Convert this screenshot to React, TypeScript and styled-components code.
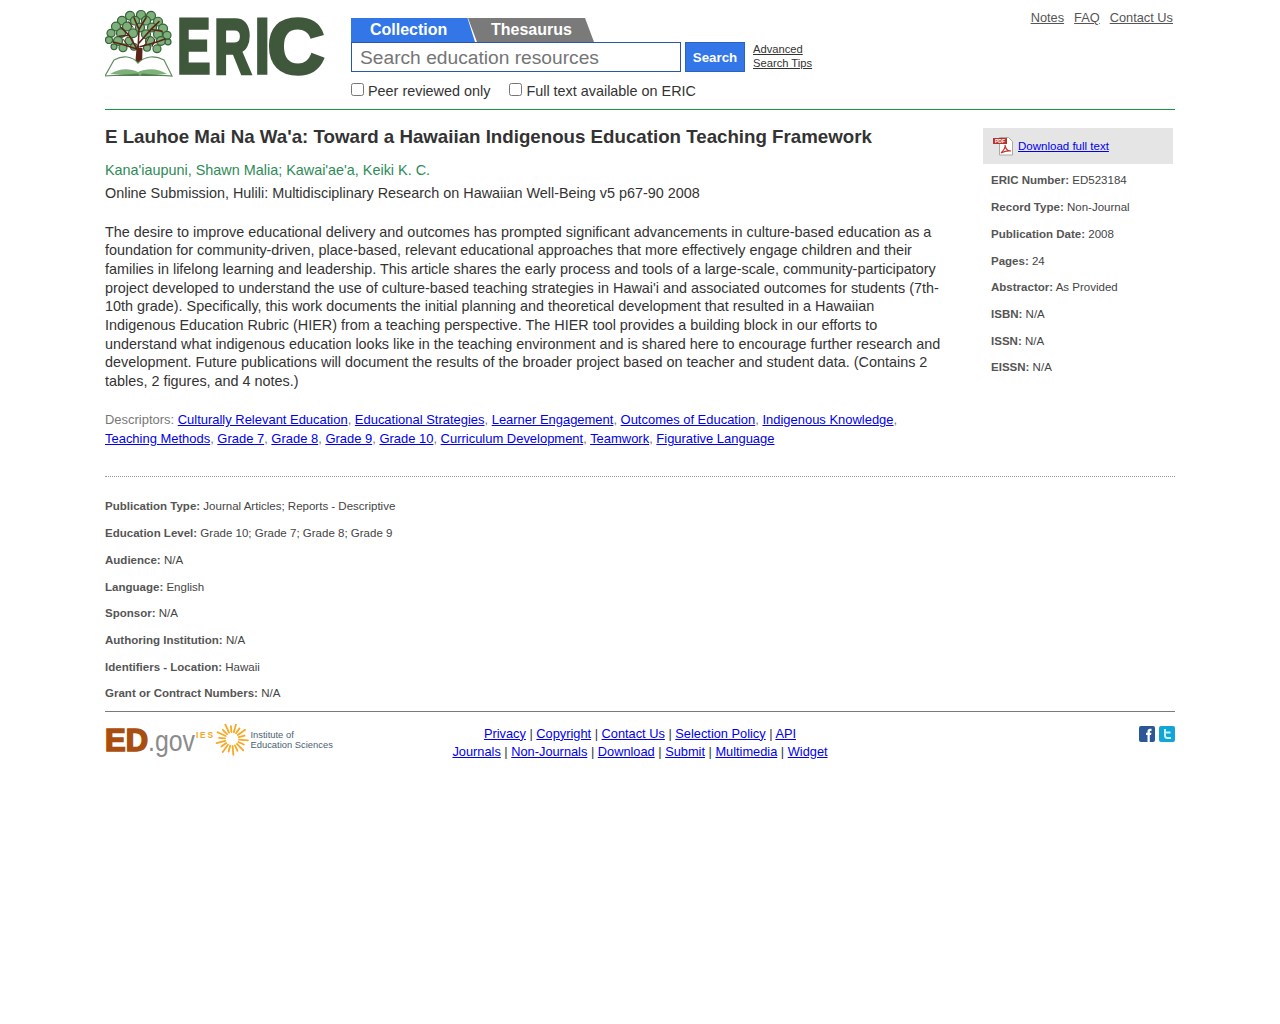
import React from "react";
import styled, { createGlobalStyle } from "styled-components";

const GlobalStyle = createGlobalStyle`
  html, body { margin: 0; padding: 0; background: #fff; }
  body { font-family: "Liberation Sans", Arial, sans-serif; color: #333; }
`;

const Page = styled.div`
  width: 1070px;
  margin-left: 105px;
`;

const Header = styled.header`
  display: flex;
  height: 109px;
  border-bottom: 1px solid #1f9142;
`;

const LogoWrap = styled.a`
  display: block;
  width: 246px;
  height: 92px;
`;

const SearchArea = styled.div`
  padding-top: 18px;
  width: 620px;
`;

const Tabs = styled.div`
  display: flex;
  height: 24px;
`;

const CollectionTab = styled.div`
  width: 124px;
  height: 24px;
  background: #3276e8;
  color: #fff;
  font-size: 16px;
  font-weight: bold;
  line-height: 24px;
  padding-left: 19px;
  box-sizing: border-box;
  clip-path: polygon(0 0, 116.5px 0, 100% 100%, 0 100%);
`;

const ThesaurusTab = styled.div`
  width: 126px;
  height: 24px;
  margin-left: -7px;
  background: #7a7a7a;
  color: #fff;
  font-size: 16px;
  font-weight: bold;
  line-height: 24px;
  padding-left: 23px;
  box-sizing: border-box;
  clip-path: polygon(0 0, 117px 0, 100% 100%, 9px 100%);
`;

const SearchRow = styled.div`
  display: flex;
  align-items: flex-start;
`;

const SearchInput = styled.input`
  box-sizing: border-box;
  width: 330px;
  height: 30px;
  border: 1px solid #2a55a8;
  padding: 2px 8px 0;
  margin: 0;
  font-family: "Liberation Sans", Arial, sans-serif;
  font-size: 19.2px;
  outline: none;
  &::placeholder { color: #757575; opacity: 1; }
`;

const SearchButton = styled.button`
  box-sizing: border-box;
  width: 60px;
  height: 30px;
  margin: 0 0 0 4px;
  padding: 0;
  background: #3276e8;
  border: 1px solid #2a62c0;
  color: #fff;
  font-family: "Liberation Sans", Arial, sans-serif;
  font-size: 13.3px;
  font-weight: bold;
`;

const SearchLinks = styled.div`
  margin-left: 8px;
  font-size: 11.2px;
  line-height: 14px;
  a { color: #333; display: block; }
`;

const FilterRow = styled.div`
  display: flex;
  align-items: center;
  height: 20px;
  margin-top: 9px;
  font-size: 14.4px;
  color: #333;
`;

const FilterLabel = styled.label<{ $gap?: number }>`
  display: flex;
  align-items: center;
  margin-right: ${(p) => p.$gap ?? 0}px;
`;

const Check = styled.input`
  width: 13px;
  height: 13px;
  margin: 0 4px 3px 0;
`;

const TopLinks = styled.nav`
  margin-left: auto;
  display: flex;
  gap: 10px;
  padding: 10px 2px 0 0;
  font-size: 12.8px;
  line-height: 15px;
  a { color: #555; }
`;

const Columns = styled.div`
  display: flex;
  justify-content: space-between;
  padding-top: 18px;
`;

const MainCol = styled.main`
  width: 840px;
`;

const Title = styled.h1`
  margin: 0;
  font-size: 18.72px;
  line-height: 18px;
  font-weight: bold;
  color: #333;
`;

const Authors = styled.div`
  margin-top: 15px;
  font-size: 14.4px;
  line-height: 18px;
  color: #2e8b57;
`;

const Source = styled.div`
  margin-top: 5px;
  font-size: 14.4px;
  line-height: 18px;
  color: #333;
`;

const Abstract = styled.p`
  margin: 20.7px 0 0;
  font-size: 14.4px;
  line-height: 18.67px;
  color: #333;
`;

const Descriptors = styled.div`
  margin-top: 19.3px;
  font-size: 12.96px;
  line-height: 19px;
  color: #777;
  a { color: #00e; }
`;

const Sidebar = styled.aside`
  width: 190px;
  margin-right: 2px;
`;

const DownloadBox = styled.div`
  display: flex;
  align-items: center;
  height: 36px;
  padding-left: 10px;
  background: #e5e5e5;
  font-size: 11.52px;
  a { color: #00e; margin: 0 0 0 5px; }
`;

const SideFacts = styled.div`
  padding: 9.45px 0 0 8px;
`;

const Fact = styled.div`
  font-size: 11.52px;
  line-height: 14px;
  margin-bottom: 12.72px;
  color: #444;
  b { color: #555; }
`;

const Details = styled.section`
  margin-top: 28px;
  padding-top: 22.4px;
  border-top: 1px dotted #999;
  ${Fact}:last-child { margin-bottom: 0; }
`;

const Footer = styled.footer`
  display: grid;
  grid-template-columns: 1fr auto 1fr;
  align-items: start;
  border-top: 1px solid #7a7a7a;
  margin-top: 10.2px;
  padding-top: 13px;
`;

const FooterLogos = styled.div`
  height: 36px;
  margin-top: -1px;
`;

const FooterLinks = styled.div`
  font-size: 12.8px;
  line-height: 18px;
  text-align: center;
  color: #333;
  a { color: #00e; }
`;

const Social = styled.div`
  display: flex;
  justify-content: flex-end;
  gap: 4px;
  padding-top: 1px;
`;

const leaves: [number, number, number][] = [
  [25, 6, 4.500], [36, 5, 4.500], [46, 6, 4.500], [17, 11, 4.500], [30, 11, 4.500], [41, 11, 4.500], [53, 12, 4.500],
  [11, 17, 4.500], [22, 17, 4.500], [35, 18, 4.500], [47, 18, 4.500], [58, 19, 4.500], [6, 24, 4], [16, 24, 4.500],
  [28, 24, 4.500], [41, 25, 4.500], [53, 25, 4.500], [62, 26, 4], [4, 31, 3.500], [13, 32, 4.500], [24, 32, 4],
  [45, 32, 4.500], [56, 32, 4.500], [63, 33, 3], [18, 39, 4], [29, 38, 3.500], [42, 39, 3.500], [52, 40, 4],
  [9, 38, 3],
];

const logoLetters: [string, number, number][] = [
  ["E", 72, 33.5],
  ["R", 108.9, 37.4],
  ["I", 149.8, 15],
  ["C", 162.6, 57],
];

const EricLogo = () => (
  <svg width="222" height="92" viewBox="0 -8 222 92" style={{ display: "block" }}>
    <g transform="translate(0 2) scale(1 .97)">
      <g fill="#7fb07a" stroke="#35633a" strokeWidth="1.200">
        {leaves.map(([cx, cy, r]) => (
          <circle key={`${cx}-${cy}`} cx={cx} cy={cy} r={r} />
        ))}
      </g>
      <g stroke="#5a2418" fill="none" strokeLinecap="round">
        <path strokeWidth="1.600" d="M33 42 L24 26 L16 18 M24 26 L14 27 M33 42 L34 20 L29 8 M34 20 L41 8 M34 34 L46 20 L54 12 M46 20 L57 22 M35 38 L52 33 L60 30 M31 40 L16 35 L8 33" />
        <path strokeWidth="1" d="M18 30 L24 38 M44 28 L40 36 M28 18 L24 12 M50 30 L47 38" />
      </g>
    </g>
    <path d="M31.500 40 L37.500 40 L37 59 L30 59 Z" fill="#5a2418" />
    <path d="M0 68 L9 52 C18 47 27 48 33 55 C40 48 50 47 59 52 L67 68 L35 66 Z" fill="#fff" stroke="#5f8f5c" strokeWidth="1.200" />
    <path d="M5 66 C14 60 25 60 33 64 C42 60 53 60 62 66 L35 68 Z" fill="#7fb07a" />
    <path d="M0 68 L33 65.500 L35 68 L37 65.500 L67 68 Z" fill="#4f7f4f" />
    {logoLetters.map(([letter, x, len]) => (
      <text
        key={letter}
        x={x}
        y={64.500}
        fontFamily="'Liberation Sans', Arial, sans-serif"
        fontWeight="bold"
        fontSize="78"
        fill="#3f573b"
        stroke="#3f573b"
        strokeWidth="3.500"
        textLength={len}
        lengthAdjust="spacingAndGlyphs"
      >
        {letter}
      </text>
    ))}
  </svg>
);

const PdfIcon = () => (
  <svg width="20" height="20" viewBox="0 0 20 20" style={{ flex: "none" }}>
    <path d="M6.500 1.500 H15.500 L19.500 5.500 V19 H6.500 Z" fill="#fff" stroke="#a8a8a8" />
    <rect x="0" y="2" width="14" height="6" fill="#b5352c" />
    <text x="2" y="7" fontFamily="'Liberation Sans', Arial, sans-serif" fontWeight="bold" fontSize="5" fill="#fff">PDF</text>
    <path d="M8 17 C11 14 12.500 11 12 9 C12.500 13 15 15 18 15 C14 14.500 11 15.500 8 17 Z" fill="none" stroke="#c43a30" strokeWidth="1.200" />
  </svg>
);

const GovLogos = () => (
  <svg width="232" height="36" viewBox="0 0 232 36" style={{ display: "block" }}>
    <text x="0" y="27" fontFamily="'Liberation Sans', Arial, sans-serif" fontWeight="bold" fontSize="30.500" fill="#a94e0f" stroke="#a94e0f" strokeWidth="1.600" textLength="43" lengthAdjust="spacingAndGlyphs">ED</text>
    <text x="43" y="27" fontFamily="'Liberation Sans', Arial, sans-serif" fontSize="29" fill="#8b8b8b" textLength="47" lengthAdjust="spacingAndGlyphs">.gov</text>
    <text x="91" y="14" fontFamily="'Liberation Sans', Arial, sans-serif" fontWeight="bold" fontSize="8.400" fill="#f5a623" textLength="17">IES</text>
    <g stroke="#f9a825" strokeWidth="1.800" strokeLinecap="round">
      {Array.from({ length: 18 }).map((_, i) => {
        const a = (i * Math.PI * 2) / 18 + 0.09;
        const r2 = i % 2 === 0 ? 16 : 13;
        return (
          <line
            key={i}
            x1={127 + Math.cos(a) * 7}
            y1={15 + Math.sin(a) * 7}
            x2={127 + Math.cos(a) * r2}
            y2={15 + Math.sin(a) * r2}
          />
        );
      })}
    </g>
    <text x="145.500" y="14" fontFamily="'Liberation Sans', Arial, sans-serif" fontSize="9.400" fill="#4a6274">Institute of</text>
    <text x="145.500" y="24" fontFamily="'Liberation Sans', Arial, sans-serif" fontSize="9.400" fill="#4a6274">Education Sciences</text>
  </svg>
);

const FacebookIcon = () => (
  <svg width="16" height="16" viewBox="0 0 16 16">
    <rect width="16" height="16" rx="2" fill="#2b5797" />
    <path d="M8.500 16 V9 H7 V6.800 H8.500 V5.400 C8.500 3.600 9.500 2.800 11 2.800 H12.500 V5 H11.400 C10.900 5 10.800 5.300 10.800 5.700 V6.800 H12.400 L12.100 9 H10.800 V16 Z" fill="#fff" />
  </svg>
);

const TwitterIcon = () => (
  <svg width="16" height="16" viewBox="0 0 16 16">
    <rect width="16" height="16" rx="2" fill="#12a5d6" />
    <path d="M5 3 H7 V5.500 H11.500 V7.500 H7 V9.500 C7 10.800 8 11 9 11 H12 V13 H8.500 C6 13 5 11.800 5 9.500 Z" fill="#c8f0fb" />
  </svg>
);

const descriptors = [
  "Culturally Relevant Education",
  "Educational Strategies",
  "Learner Engagement",
  "Outcomes of Education",
  "Indigenous Knowledge",
  "Teaching Methods",
  "Grade 7",
  "Grade 8",
  "Grade 9",
  "Grade 10",
  "Curriculum Development",
  "Teamwork",
  "Figurative Language",
];

const sideFacts: [string, string][] = [
  ["ERIC Number:", "ED523184"],
  ["Record Type:", "Non-Journal"],
  ["Publication Date:", "2008"],
  ["Pages:", "24"],
  ["Abstractor:", "As Provided"],
  ["ISBN:", "N/A"],
  ["ISSN:", "N/A"],
  ["EISSN:", "N/A"],
];

const detailFacts: [string, string][] = [
  ["Publication Type:", "Journal Articles; Reports - Descriptive"],
  ["Education Level:", "Grade 10; Grade 7; Grade 8; Grade 9"],
  ["Audience:", "N/A"],
  ["Language:", "English"],
  ["Sponsor:", "N/A"],
  ["Authoring Institution:", "N/A"],
  ["Identifiers - Location:", "Hawaii"],
  ["Grant or Contract Numbers:", "N/A"],
];

const footerRows = [
  ["Privacy", "Copyright", "Contact Us", "Selection Policy", "API"],
  ["Journals", "Non-Journals", "Download", "Submit", "Multimedia", "Widget"],
];

export default function App() {
  return (
    <Page>
      <GlobalStyle />
      <Header>
        <LogoWrap href="#">
          <EricLogo />
        </LogoWrap>
        <SearchArea>
          <Tabs>
            <CollectionTab>Collection</CollectionTab>
            <ThesaurusTab>Thesaurus</ThesaurusTab>
          </Tabs>
          <SearchRow>
            <SearchInput placeholder="Search education resources" />
            <SearchButton>Search</SearchButton>
            <SearchLinks>
              <a href="#">Advanced</a>
              <a href="#">Search Tips</a>
            </SearchLinks>
          </SearchRow>
          <FilterRow>
            <FilterLabel $gap={19}>
              <Check type="checkbox" />
              Peer reviewed only
            </FilterLabel>
            <FilterLabel>
              <Check type="checkbox" />
              Full text available on ERIC
            </FilterLabel>
          </FilterRow>
        </SearchArea>
        <TopLinks>
          <a href="#">Notes</a>
          <a href="#">FAQ</a>
          <a href="#">Contact Us</a>
        </TopLinks>
      </Header>
      <Columns>
        <MainCol>
          <Title>E Lauhoe Mai Na Wa'a: Toward a Hawaiian Indigenous Education Teaching Framework</Title>
          <Authors>Kana'iaupuni, Shawn Malia; Kawai'ae'a, Keiki K. C.</Authors>
          <Source>Online Submission, Hulili: Multidisciplinary Research on Hawaiian Well-Being v5 p67-90 2008</Source>
          <Abstract>
            The desire to improve educational delivery and outcomes has prompted significant advancements in
            culture-based education as a foundation for community-driven, place-based, relevant educational
            approaches that more effectively engage children and their families in lifelong learning and
            leadership. This article shares the early process and tools of a large-scale, community-participatory
            project developed to understand the use of culture-based teaching strategies in Hawai'i and associated
            outcomes for students (7th-10th grade). Specifically, this work documents the initial planning and
            theoretical development that resulted in a Hawaiian Indigenous Education Rubric (HIER) from a teaching
            perspective. The HIER tool provides a building block in our efforts to understand what indigenous
            education looks like in the teaching environment and is shared here to encourage further research and
            development. Future publications will document the results of the broader project based on teacher and
            student data. (Contains 2 tables, 2 figures, and 4 notes.)
          </Abstract>
          <Descriptors>
            Descriptors:{" "}
            {descriptors.map((d, i) => (
              <React.Fragment key={d}>
                <a href="#">{d}</a>
                {i < descriptors.length - 1 ? ", " : ""}
              </React.Fragment>
            ))}
          </Descriptors>
        </MainCol>
        <Sidebar>
          <DownloadBox>
            <PdfIcon />
            <a href="#">Download full text</a>
          </DownloadBox>
          <SideFacts>
            {sideFacts.map(([k, v]) => (
              <Fact key={k}>
                <b>{k}</b> {v}
              </Fact>
            ))}
          </SideFacts>
        </Sidebar>
      </Columns>
      <Details>
        {detailFacts.map(([k, v]) => (
          <Fact key={k}>
            <b>{k}</b> {v}
          </Fact>
        ))}
      </Details>
      <Footer>
        <FooterLogos>
          <GovLogos />
        </FooterLogos>
        <FooterLinks>
          {footerRows.map((row) => (
            <div key={row[0]}>
              {row.map((l, i) => (
                <React.Fragment key={l}>
                  <a href="#">{l}</a>
                  {i < row.length - 1 ? " | " : ""}
                </React.Fragment>
              ))}
            </div>
          ))}
        </FooterLinks>
        <Social>
          <FacebookIcon />
          <TwitterIcon />
        </Social>
      </Footer>
    </Page>
  );
}
